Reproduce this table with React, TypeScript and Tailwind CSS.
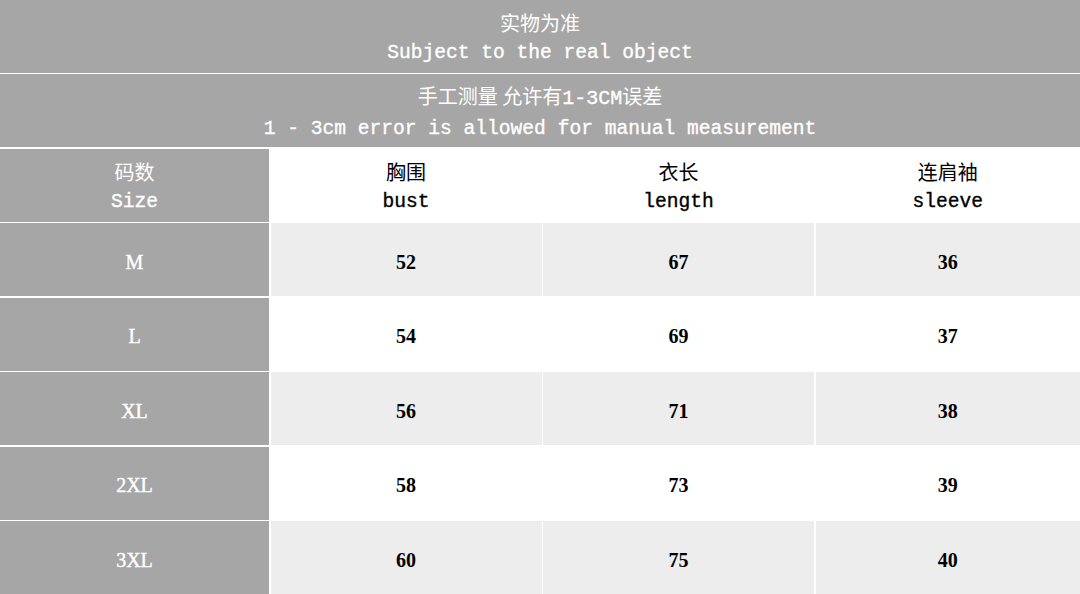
const rows = [
  { size: 'M', bust: '52', length: '67', sleeve: '36' },
  { size: 'L', bust: '54', length: '69', sleeve: '37' },
  { size: 'XL', bust: '56', length: '71', sleeve: '38' },
  { size: '2XL', bust: '58', length: '73', sleeve: '39' },
  { size: '3XL', bust: '60', length: '75', sleeve: '40' },
];

const cjk = "font-['Noto_Sans_CJK_SC',sans-serif] text-[20px] leading-[30px]";
const mono = "font-['Liberation_Mono','Noto_Sans_CJK_SC',monospace] text-[19.6px] leading-[30px] [-webkit-text-stroke:0.35px_currentColor]";
const num = "font-['Liberation_Serif',serif] font-bold text-[20px]";
const sizeFont = "font-['Liberation_Serif',serif] text-[20px] [-webkit-text-stroke:0.4px_white]";
const cols = 'grid grid-cols-[269px_271px_271px_1fr] gap-[1.5px]';

function TwoLine({ zh, en, dark }: { zh: React.ReactNode; en: string; dark?: boolean }) {
  return (
    <div className={`flex flex-col items-center justify-center pt-[3px] ${dark ? 'text-black' : 'text-white'}`}>
      <span className={cjk}>{zh}</span>
      <span className={mono}>{en}</span>
    </div>
  );
}

export default function App() {
  return (
    <div className="w-[1080px] h-[594px] bg-white flex flex-col gap-[1.5px] overflow-hidden">
      {/* Notes */}
      <div className="flex-1 bg-[#a6a6a6] flex items-center justify-center">
        <TwoLine zh="实物为准" en="Subject to the real object" />
      </div>
      <div className="flex-1 bg-[#a6a6a6] flex items-center justify-center">
        <TwoLine
          zh={
            <>
              手工测量 允许有<span className="font-['Liberation_Mono',monospace] text-[20px] [-webkit-text-stroke:0.35px_currentColor]">1-3CM</span>误差
            </>
          }
          en="1 - 3cm error is allowed for manual measurement"
        />
      </div>

      {/* Header */}
      <div className={`flex-1 ${cols}`}>
        <div className="bg-[#a6a6a6] flex items-center justify-center">
          <TwoLine zh="码数" en="Size" />
        </div>
        <div className="bg-white flex items-center justify-center">
          <TwoLine zh="胸围" en="bust" dark />
        </div>
        <div className="bg-white flex items-center justify-center">
          <TwoLine zh="衣长" en="length" dark />
        </div>
        <div className="bg-white flex items-center justify-center">
          <TwoLine zh="连肩袖" en="sleeve" dark />
        </div>
      </div>

      {/* Data rows */}
      {rows.map((r, i) => {
        const bg = i % 2 === 0 ? 'bg-[#ededed]' : 'bg-white';
        return (
          <div key={r.size} className={`flex-1 ${cols}`}>
            <div className={`bg-[#a6a6a6] flex items-center justify-center pt-1 text-white ${sizeFont}`}>{r.size}</div>
            <div className={`${bg} flex items-center justify-center pt-1 text-black ${num}`}>{r.bust}</div>
            <div className={`${bg} flex items-center justify-center pt-1 text-black ${num}`}>{r.length}</div>
            <div className={`${bg} flex items-center justify-center pt-1 text-black ${num}`}>{r.sleeve}</div>
          </div>
        );
      })}
    </div>
  );
}
